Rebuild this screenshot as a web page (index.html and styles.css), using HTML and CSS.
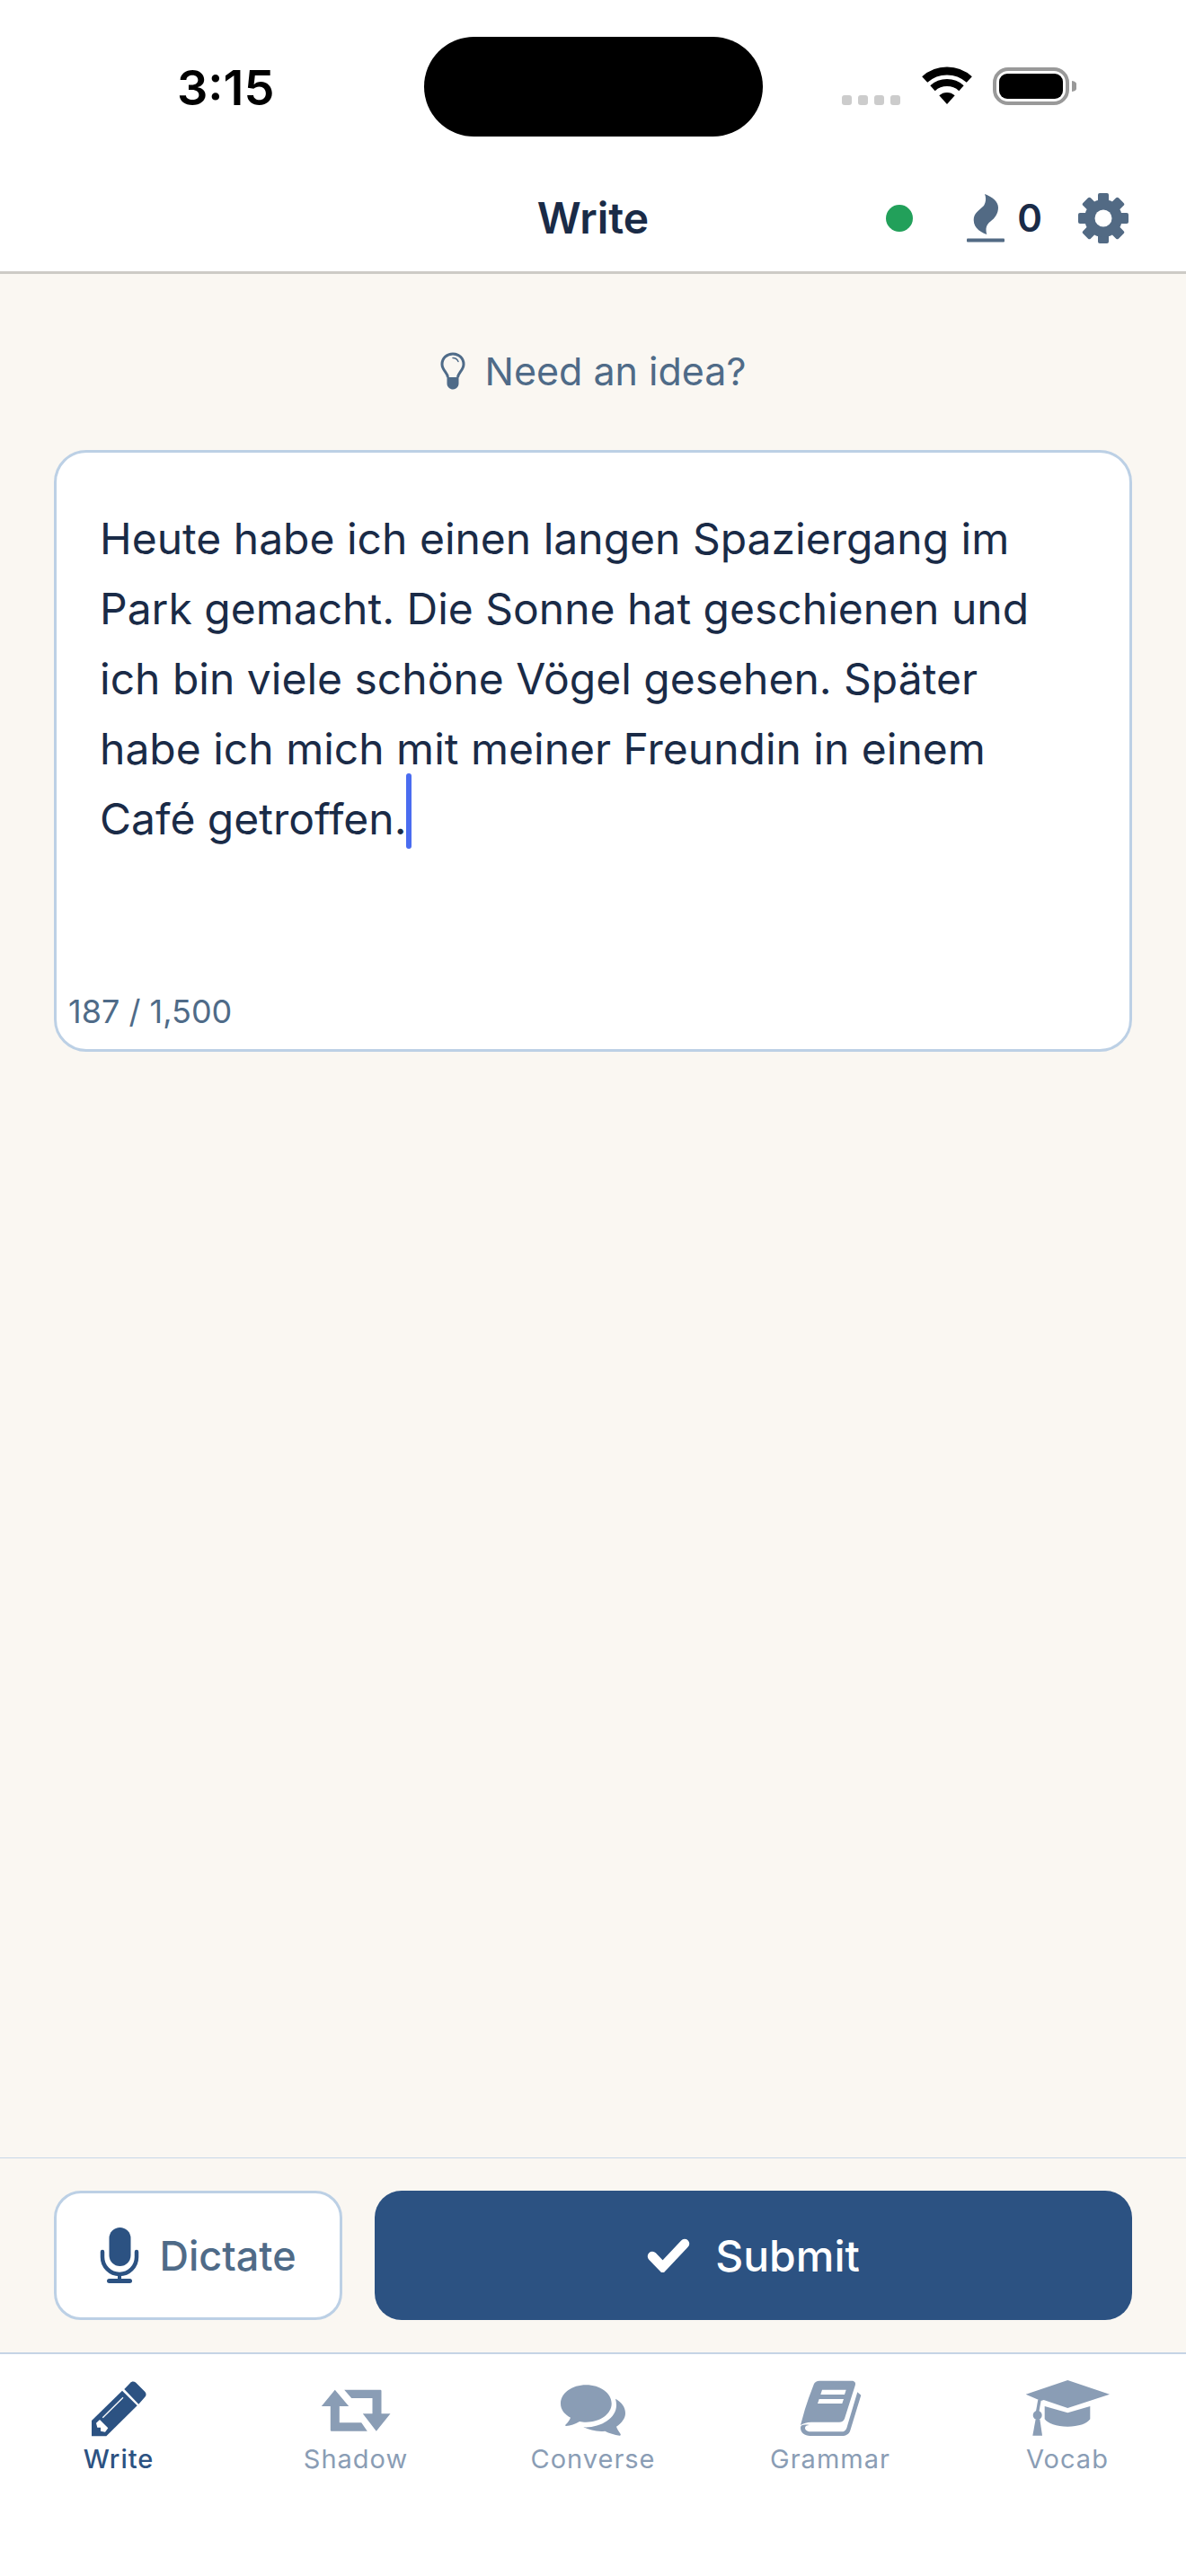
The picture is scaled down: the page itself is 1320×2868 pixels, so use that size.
FILE: index.html
```html
<!DOCTYPE html>
<html lang="en">
<head>
  <meta charset="UTF-8">
  <title>Write</title>
  <link rel="stylesheet" href="styles.css">
</head>
<body>
  <div class="app">
    <div class="status">
      <div class="status-time">3:15</div>
      <div class="island"></div>
      <div class="status-right">
        <div class="signal"><i></i><i></i><i></i><i></i></div>
        <svg class="wifi" viewBox="0 0 58 43" fill="none">
          <path d="M4.2 14.5A37 37 0 0 1 53.8 14.5" stroke="#000" stroke-width="9"/>
          <path d="M13 24.2A24 24 0 0 1 45 24.2" stroke="#000" stroke-width="8"/>
          <path d="M20.3 32.3A13 13 0 0 1 37.7 32.3L29 42Z" fill="#000"/>
        </svg>
        <svg class="battery" viewBox="0 0 93 42" fill="none">
          <rect x="2" y="2" width="81" height="38" rx="15" stroke="#999" stroke-width="4"/>
          <rect x="7" y="7" width="71" height="28" rx="9" fill="#000"/>
          <path d="M88 15a6 6 0 0 1 0 12z" fill="#999"/>
        </svg>
      </div>
    </div>

    <header class="topbar">
      <div></div>
      <h1 class="topbar-title">Write</h1>
      <div class="topbar-right">
        <span class="dot"></span>
        <div class="streak">
          <svg class="flame" viewBox="0 0 42 54">
            <path d="M20 0C28 3 35 8 35 15C35 22 31 27 27 30C23 33 20 37 22.300 45C14 42 7.700 37 7.700 29C7.700 21 14 18 19 13C21 10 22 5 20 0Z" fill="#526a84"/>
            <rect x="0" y="49.500" width="42" height="4" rx="1" fill="#526a84"/>
          </svg>
          <span class="streak-num">0</span>
        </div>
        <svg class="gear" viewBox="0 0 56 56">
          <g fill="#526a84">
            <rect x="22" y="0" width="12" height="56" rx="2"/>
            <rect x="22" y="0" width="12" height="56" rx="2" transform="rotate(45 28 28)"/>
            <rect x="22" y="0" width="12" height="56" rx="2" transform="rotate(90 28 28)"/>
            <rect x="22" y="0" width="12" height="56" rx="2" transform="rotate(135 28 28)"/>
            <circle cx="28" cy="28" r="21"/>
          </g>
          <circle cx="28" cy="28" r="9.500" fill="#fff"/>
        </svg>
      </div>
    </header>

    <main class="content">
      <div class="idea">
        <svg class="bulb" viewBox="0 0 28 42" fill="none">
          <path d="M8.500 28C8 23 2 20 2 13.500C2 6.500 7.500 2 14 2C20.500 2 26 6.500 26 13.500C26 20 20 23 19.500 28" stroke="#4f6b88" stroke-width="3"/>
          <path d="M14 6.500C17 6.500 19 8 20 10.500" stroke="#4f6b88" stroke-width="1.500" stroke-linecap="round"/>
          <path d="M7.500 28H20.500V35C20.500 39 17 41.500 14 41.500C11 41.500 7.500 39 7.500 35Z" fill="#4f6b88"/>
        </svg>
        <span>Need an idea?</span>
      </div>
      <div class="editor">
        <p class="editor-text">Heute habe ich einen langen Spaziergang im Park gemacht. Die Sonne hat geschienen und ich bin viele schöne Vögel gesehen. Später habe ich mich mit meiner Freundin in einem Café getroffen.<span class="caret"></span></p>
        <div class="counter">187 / 1,500</div>
      </div>
    </main>

    <div class="actions">
      <button class="btn-dictate">
        <svg class="mic" viewBox="0 0 44 64" fill="none">
          <rect x="10.500" y="1" width="24" height="43" rx="12" fill="#2c5282"/>
          <path d="M3 28V34A19 19 0 0 0 41 34V28" stroke="#2c5282" stroke-width="4.500" stroke-linecap="round"/>
          <path d="M22 52V60" stroke="#2c5282" stroke-width="4"/>
          <path d="M10.500 60.500H33.500" stroke="#2c5282" stroke-width="5" stroke-linecap="round"/>
        </svg>
        Dictate
      </button>
      <button class="btn-submit">
        <svg class="check" viewBox="0 0 48 38" fill="none">
          <path d="M6 20L17.500 32L42 6" stroke="#fff" stroke-width="10.500" stroke-linecap="round"/>
        </svg>
        Submit
      </button>
    </div>

    <nav class="tabs">
      <div class="tab active">
        <svg viewBox="0 0 96 64">
          <path d="M18 62.300V45L52 11.700L68.700 28.300L34.300 62.300Z"/>
          <path d="M54.300 10L61 3C62.500 1 65 1 67 2.500L77 12.500C79 14.500 79 17 77.500 18.500L70.300 26.700Z"/>
          <path d="M30.300 41.700L53 19.300" stroke="#fff" stroke-width="1.300"/>
          <path d="M23 47.700L27 44L36.300 53.300L33 57.700L28 56.700V52.700H24.300Z" fill="#fff"/>
        </svg>
        <span>Write</span>
      </div>
      <div class="tab">
        <svg viewBox="0 0 96 64">
          <path d="M24.800 10.700L9.800 29H19.800V55.500Q19.800 56.700 21 56.700H60.800L54.200 47.300H29.800V29H40.200Z"/>
          <path d="M70.800 56.700L55.800 37.300H66.500V20H43.200L35.200 10.700H75.300Q76.500 10.700 76.500 12V37.300H86.500Z"/>
        </svg>
        <span>Shadow</span>
      </div>
      <div class="tab">
        <svg viewBox="0 0 96 64">
          <path d="M40.300 5.300C56 5.300 68.700 14.500 68.700 26C68.700 37.500 56 46.700 40.300 46.700C37.500 46.700 35 46.400 33 46C28 49 23 50.500 18 51C17 51 17 50 17.500 49.500C20 47 22 44.500 23 41.700C16 38 12 32.500 12 26C12 14.500 24.600 5.300 40.300 5.300Z"/>
          <path d="M73 20.700C80 24.500 84 30 84 36.700C84 42.500 80 47.500 74 51.700C75 54.500 77 57.500 78.700 60C79 61 78.500 62 77.500 61.700C72 61 66 59 61.300 56.700C52 57.500 44 55.500 37.300 52.300C55 53.500 74 43 74 28C74 25.500 73.700 23 73 20.700Z"/>
        </svg>
        <span>Converse</span>
      </div>
      <div class="tab">
        <svg viewBox="0 0 96 64">
          <path fill-rule="evenodd" d="M36 0.700H72C75.500 0.700 76.700 3 75.700 6L64 42.700C63 45.500 61 46.700 58 46.700H27C22 46.700 18 48 15 50L20 32L24 20L30 4C31 2 33 0.700 36 0.700ZM39 10.700H65.700L64 16H37.300ZM35.700 21H63L61.300 26H34Z"/>
          <path d="M15 53C15 58.500 19.500 62 25.700 62H61C65.500 62 69 60 70.300 56L82.300 16.700L78.300 13.300L67 51C66 55 64.500 57.300 61 57.300H25.700C22.500 57.300 20 55.500 20 53C20 51 22 50 25 50C19 49 15 49.500 15 53Z"/>
        </svg>
        <span>Grammar</span>
      </div>
      <div class="tab">
        <svg viewBox="0 0 96 64">
          <path d="M48.300 0L95 15.700L48.300 31L21.700 22L18.500 23L1.700 15.700Z"/>
          <path d="M22.700 29L48.300 36.300L73.300 29V43.300C70 48.500 60 51.700 48.300 51.700C36 51.700 26 48 22.700 43.300Z"/>
          <path d="M17 22L14.500 36" stroke-width="3.500" stroke="#8a9db5" fill="none"/>
          <circle cx="14.700" cy="39" r="5"/>
          <path d="M12.700 43.300L9.300 61.700H20L17.300 43.300Z"/>
        </svg>
        <span>Vocab</span>
      </div>
    </nav>
  </div>
</body>
</html>
```

FILE: styles.css
```css
* { box-sizing: border-box; }
html, body {
  margin: 0;
  height: 100%;
}
body {
  font-family: Inter, "Noto Sans", sans-serif;
  background: #fff;
  color: #1a2b47;
}
.app {
  display: flex;
  flex-direction: column;
  height: 2868px;
}
.status {
  display: grid;
  grid-template-columns: 1fr 377px 1fr;
  height: 180px;
  padding-top: 41px;
  flex: none;
}
.status-time {
  padding-left: 197px;
  font-size: 54px;
  font-weight: 600;
  line-height: 114px;
  color: #000;
}
.island {
  height: 111px;
  background: #000;
  border-radius: 56px;
}
.status-right {
  display: flex;
  justify-content: flex-end;
  align-items: flex-end;
  height: 76px;
  padding-right: 122px;
}
.signal {
  display: flex;
  gap: 7px;
  margin-right: 23px;
}
.signal i {
  width: 11px;
  height: 11px;
  border-radius: 3px;
  background: #ccc;
}
.wifi { width: 58px; height: 43px; margin-right: 22px; }
.battery { width: 93px; height: 42px; }
.topbar {
  display: grid;
  grid-template-columns: 1fr auto 1fr;
  align-items: center;
  height: 125px;
  padding-top: 3px;
  flex: none;
  border-bottom: 3px solid #cdcbc6;
}
.topbar-title {
  margin: 0;
  font-size: 48px;
  font-weight: 600;
  color: #1a2b47;
}
.topbar-right {
  display: flex;
  align-items: center;
  justify-content: flex-end;
  padding-right: 64px;
}
.dot {
  width: 30px;
  height: 30px;
  border-radius: 50%;
  background: #22a05a;
  margin-right: 60px;
}
.streak {
  display: flex;
  align-items: center;
  gap: 14px;
  margin-right: 40px;
}
.flame { width: 42px; height: 54px; }
.streak-num {
  font-size: 42px;
  font-weight: 600;
  color: #1a2b47;
}
.gear { width: 56px; height: 56px; }
.content {
  flex: 1;
  background: #faf7f2;
  padding: 81px 60px 0;
}
.idea {
  display: flex;
  align-items: center;
  justify-content: center;
  gap: 22px;
  height: 54px;
  font-size: 43px;
  color: #4f6b88;
}
.bulb { width: 28px; height: 42px; }
.editor {
  display: flex;
  flex-direction: column;
  height: 670px;
  margin-top: 61px;
  background: #fff;
  border: 3px solid #bcd0e5;
  border-radius: 36px;
}
.editor-text {
  margin: 0;
  padding: 57px 48px 0;
  font-size: 48px;
  line-height: 78px;
  color: #1a2b47;
}
.caret {
  display: inline-block;
  width: 6px;
  height: 84px;
  margin: -20px 0;
  vertical-align: 4px;
  background: #4a6cf0;
  border-radius: 3px;
}
.counter {
  margin-top: auto;
  padding: 0 0 20px 13px;
  font-size: 36px;
  line-height: 44px;
  color: #4f6b88;
}
.actions {
  display: flex;
  gap: 36px;
  height: 217px;
  padding: 36px 60px;
  flex: none;
  background: #faf7f2;
  border-top: 1px solid #c8d7e8;
}
.actions button {
  display: flex;
  align-items: center;
  justify-content: center;
  height: 144px;
  font-family: inherit;
  border-radius: 30px;
}
.btn-dictate {
  width: 321px;
  gap: 22px;
  font-size: 45px;
  font-weight: 500;
  color: #4f6b88;
  background: #fff;
  border: 3px solid #bcd0e5;
}
.btn-submit {
  flex: 1;
  gap: 28px;
  font-size: 48px;
  font-weight: 500;
  color: #fff;
  background: #2c5282;
  border: none;
}
.mic { width: 44px; height: 64px; }
.check { width: 48px; height: 38px; }
.tabs {
  display: grid;
  grid-template-columns: repeat(5, 1fr);
  height: 249px;
  padding-top: 29px;
  flex: none;
  background: #fff;
  border-top: 2px solid #c5d4e5;
}
.tab {
  display: flex;
  flex-direction: column;
  align-items: center;
  fill: #8a9db5;
  color: #8a9db5;
  font-size: 29px;
  font-weight: 400;
  letter-spacing: 1px;
}
.tab svg { width: 96px; height: 64px; }
.tab span { margin-top: 6px; line-height: 36px; }
.tab.active { fill: #2c5282; color: #2c5282; font-weight: 500; }
```
